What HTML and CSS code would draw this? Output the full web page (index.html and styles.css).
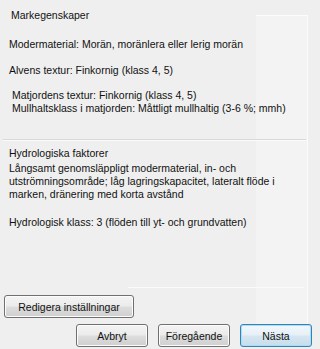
FILE: index.html
```html
<!DOCTYPE html>
<html>
<head>
<meta charset="utf-8">
<link rel="stylesheet" href="styles.css">
</head>
<body>
<div class="page">
  <div class="content">
    <section class="props">
      <div class="title">Markegenskaper</div>
      <p class="row r1">Modermaterial: Morän, moränlera eller lerig morän</p>
      <p class="row r2">Alvens textur: Finkornig (klass 4, 5)</p>
      <p class="row r3 indent">Matjordens textur: Finkornig (klass 4, 5)<br>Mullhaltsklass i matjorden: Måttligt mullhaltig (3-6 %; mmh)</p>
    </section>
    <div class="sep"></div>
    <section class="hydro">
      <div class="title2">Hydrologiska faktorer</div>
      <p class="row h1">Långsamt genomsläppligt modermaterial, in- och utströmningsområde; låg lagringskapacitet, lateralt flöde i marken, dränering med korta avstånd</p>
      <p class="row h2">Hydrologisk klass: 3 (flöden till yt- och grundvatten)</p>
    </section>
  </div>
  <div class="footer">
    <div class="rule"></div>
    <div class="edit-row"><button class="btn edit">Redigera inställningar</button></div>
    <div class="nav-row">
      <button class="btn nav">Avbryt</button>
      <button class="btn nav">Föregående</button>
      <button class="btn nav default">Nästa</button>
    </div>
  </div>
</div>
</body>
</html>
```

FILE: styles.css
```css
html, body {
  margin: 0;
  padding: 0;
  background: #efefef;
}
.page {
  width: 317px;
  height: 349px;
  display: flex;
  flex-direction: column;
  font-family: "Liberation Sans", Arial, sans-serif;
  font-size: 10.5px;
  line-height: 13px;
  color: #111;
  position: relative;
  overflow: hidden;
}
.page::before {
  content: "";
  position: absolute;
  left: 256px;
  top: 15px;
  width: 51px;
  height: 330px;
  border-top: 1px solid #fbfbfb;
  border-right: 1px solid #fbfbfb;
  background: #f3f3f3;
}
.content {
  position: relative;
}
.props {
  padding: 9px 0 0 9px;
}
.title {
  padding-left: 2px;
}
.row {
  margin: 0;
  white-space: nowrap;
}
.r1 { margin-top: 16px; }
.r2 { margin-top: 13px; }
.r3 { margin-top: 12px; }
.indent { padding-left: 3px; }
.sep {
  margin: 24px 0 0 3px;
  width: 303px;
  height: 1px;
  background: #d9d9d9;
  border-bottom: 1px solid #fafafa;
}
.hydro {
  padding: 6px 0 0 9px;
}
.h1 {
  margin-top: 2px;
  white-space: normal;
  width: 285px;
}
.h2 { margin-top: 15px; }
.footer {
  margin-top: auto;
  position: relative;
  padding-bottom: 2px;
}
.rule {
  margin-left: 128px;
  width: 176px;
  height: 1px;
  background: #fafafa;
}
.edit-row {
  padding: 7px 0 0 4px;
}
.nav-row {
  display: flex;
  justify-content: flex-end;
  gap: 10px;
  padding: 6px 5px 0 0;
}
.btn {
  font-family: "Liberation Sans", Arial, sans-serif;
  font-size: 10.5px;
  color: #111;
  height: 23px;
  padding: 0;
  border: 1px solid #707070;
  border-radius: 3px;
  background: linear-gradient(to bottom, #f4f4f4 0%, #ebebeb 48%, #dddddd 52%, #cfcfcf 100%);
  box-shadow: inset 0 0 0 1px #fcfcfc;
}
.edit { width: 130px; }
.nav { width: 72px; }
.default {
  border-color: #3c7fb1;
  box-shadow: inset 0 0 0 1px #9fe2f9;
  background: linear-gradient(to bottom, #f2f8fc 0%, #e6f0f7 48%, #d6e6f1 52%, #c9dcea 100%);
}
```
